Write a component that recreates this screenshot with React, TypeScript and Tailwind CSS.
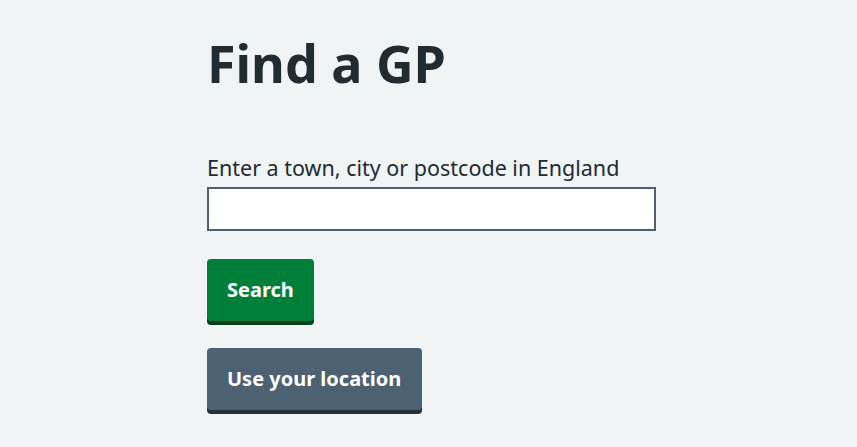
import React, { useState } from "react";

const App: React.FC = () => {
    const [query, setQuery] = useState<string>('');

    const queryHandler = (e: React.FormEvent<HTMLInputElement>) => {
        setQuery(e.currentTarget.value);
    }

    return (
        <main className="min-h-screen bg-[#f0f4f5] text-[#212b32] font-['Noto_Sans',_'Liberation_Sans',_sans-serif]">
            <div className="pl-[207px] pt-[32px]">
                <h1 className="text-[52px] leading-[1.2] font-bold mb-[59px]">Find a GP</h1>
                <form onSubmit={(e) => e.preventDefault()}>
                    <label htmlFor="location" className="block text-[21.5px] leading-[30px] mb-[4px]">
                        Enter a town, city or postcode in England
                    </label>
                    <input
                        id="location"
                        type="text"
                        value={query}
                        onChange={queryHandler}
                        className="block w-[449px] h-[44px] bg-white border-2 border-[#4c6272] px-2 text-[19px] outline-none"
                    />
                    <button
                        type="submit"
                        className="mt-[28px] block bg-[#007f3b] text-white font-bold text-[20px] leading-[28px] px-[20px] py-[17px] rounded-[4px] shadow-[0_4px_0_#00401e]"
                    >
                        Search
                    </button>
                    <button
                        type="button"
                        className="mt-[27px] block bg-[#4c6272] text-white font-bold text-[20px] leading-[28px] pl-[20px] pr-[21px] py-[17px] rounded-[4px] shadow-[0_4px_0_#263139]"
                    >
                        Use your location
                    </button>
                </form>
            </div>
        </main>
    );
}

export default App;
